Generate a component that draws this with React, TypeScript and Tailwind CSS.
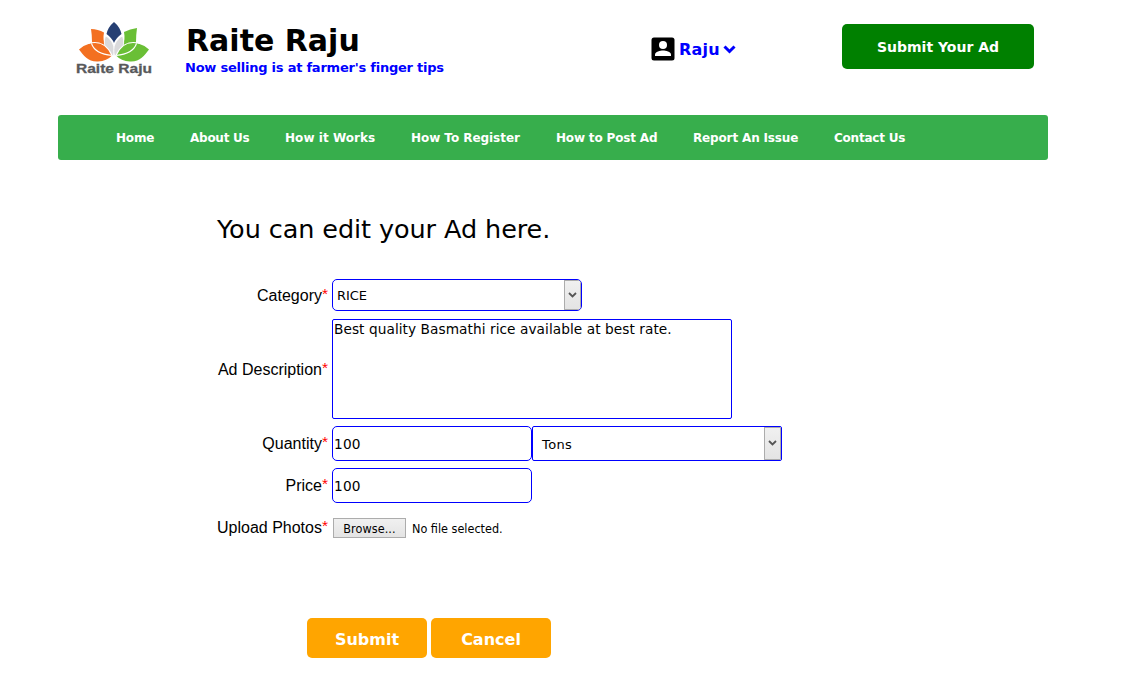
import React from "react";

const nav = [
  { label: "Home", cls: "w-[74px] tracking-[-0.200px]" },
  { label: "About Us", cls: "w-[95px] tracking-[-0.250px]" },
  { label: "How it Works", cls: "w-[126px] tracking-[0.050px]" },
  { label: "How To Register", cls: "w-[145px] tracking-[-0.050px]" },
  { label: "How to Post Ad", cls: "w-[137px] tracking-[-0.170px]" },
  { label: "Report An Issue", cls: "w-[141px] tracking-[-0.150px]" },
  { label: "Contact Us", cls: "w-[90px] tracking-[-0.220px]" },
];

const narrow = "font-['DejaVu_Sans_Condensed','DejaVu_Sans',sans-serif] [font-stretch:condensed]";

function Logo() {
  return (
    <svg className="block h-[56px] w-[78px] shrink-0" viewBox="74 21 78 56">
      <path d="M91 29Q98 29 104 32.500C102 42 106 50 112.500 56C101 55 91 50 92 42Q92 35 91 29z" fill="#f37021" />
      <path d="M137 28Q130 29 124 32C126 42 122 50 115.500 56C127 55 137 50 136 42Q136 35 137 28z" fill="#6abf36" />
      <path d="M105.500 36C102 45 107 54 113.500 56C116 47 112 39 105.500 36z" fill="#d9d9db" stroke="white" strokeWidth="0.8" />
      <path d="M122.500 36C126 45 121 54 114.500 56C112 47 116 39 122.500 36z" fill="#d9d9db" stroke="white" strokeWidth="0.8" />
      <path d="M114 22Q108 27 106.500 34Q112 38 114 43Q116 38 121.500 34Q120 27 114 22z" fill="#263f73" />
      <path d="M79 49.500Q84 45 91 43C100 41 108 46 112 55.500Q107 61 98 61.500C88 62 84 56 79 49.500z" fill="#f37021" />
      <path d="M149 49.500Q144 45 137 43C128 41 120 46 116 55.500Q121 61 130 61.500C140 62 144 56 149 49.500z" fill="#6abf36" />
      <path d="M88 43.500C100 40 108 46 112 55.500M91.500 43.500C94 51 102 54.500 112 55.500M140 43.500C128 40 120 46 116 55.500M136.500 43.500C134 51 126 54.500 116 55.500" fill="none" stroke="white" strokeWidth="1.1" />
      <text x="76" y="73" fontFamily="Liberation Sans" fontWeight="700" fontSize="13" textLength="76" lengthAdjust="spacingAndGlyphs" fill="#58595b" stroke="#58595b" strokeWidth="0.3">Raite Raju</text>
    </svg>
  );
}

function Label({ children }: { children: string }) {
  return (
    <label className="flex w-[328px] shrink-0 justify-end font-['Liberation_Sans',sans-serif] text-[16px] leading-[18px]">
      {children}
      <span className="text-[15.500px] leading-[14px] text-[#ff0000]">*</span>
    </label>
  );
}

function Arrow() {
  return (
    <span className="flex w-[17px] shrink-0 items-center justify-center border border-[#acacac] bg-linear-to-b from-[#f0f0f0] to-[#e4e4e4]">
      <svg className="h-[7px] w-[9px]" viewBox="0 0 9 7">
        <path d="M1 1l3.500 3.500L8 1" fill="none" stroke="#555" strokeWidth="1.800" />
      </svg>
    </span>
  );
}

export default function App() {
  return (
    <div className="h-[683px] w-[1125px] overflow-hidden bg-white font-['DejaVu_Sans',sans-serif] text-black">
      <header className="flex h-[115px] items-start pl-[74px]">
        <div className="pt-[21px]"><Logo /></div>
        <div className="w-[499px] pl-[33px] pt-[23px]">
          <h1 className="pl-px text-[30px] font-bold leading-[36px] whitespace-nowrap">Raite Raju</h1>
          <p className="text-[13px] font-bold leading-[18px] tracking-[-0.230px] whitespace-nowrap text-[#0000ff]">Now selling is at farmer's finger tips</p>
        </div>
        <div className="flex w-[191px] items-start pt-[37px] text-[#0000ff]">
          <svg className="h-[24px] w-[24px]" viewBox="0 0 24 24">
            <rect x="0.5" y="0.5" width="23" height="23" rx="2.5" fill="#000" />
            <circle cx="12" cy="8" r="4" fill="#fff" />
            <path d="M4 19v-1.500c0-2.700 5.300-4 8-4s8 1.300 8 4V19z" fill="#fff" />
          </svg>
          <span className="ml-[4px] pt-px text-[16px] font-bold leading-6 tracking-[0.200px]">Raju</span>
          <svg className="ml-[3px] mt-[8px] h-[9px] w-[13px]" viewBox="0 0 13 9">
            <path d="M1.500 1.500l5 5 5-5" fill="none" stroke="currentColor" strokeWidth="3" />
          </svg>
        </div>
        <button className="mt-[24px] h-[45px] w-[192px] rounded-[5px] bg-[#008000] pt-[2px] text-[14px] font-bold text-white">Submit Your Ad</button>
      </header>
      <nav className="ml-[58px] flex h-[45px] w-[990px] items-center rounded-[3px] bg-[#37ae4c] pl-[58px] pt-px text-[12px] font-bold text-white">
        {nav.map((n) => (
          <a key={n.label} className={`${n.cls} shrink-0 whitespace-nowrap`}>{n.label}</a>
        ))}
      </nav>
      <main>
        <h2 className="ml-[217px] mt-[52px] h-[67px] text-[25.500px] leading-[34px] tracking-[-0.080px]">You can edit your Ad here.</h2>
        <div className="flex h-[32px] items-center">
          <div className="pt-px"><Label>Category</Label></div>
          <div className="ml-[4px] flex h-[32px] w-[250px] overflow-hidden rounded-[5px] border border-[#0000ff]">
            <span className="flex grow items-center pl-[4px] pt-px text-[13px] tracking-[-0.100px]">RICE</span>
            <Arrow />
          </div>
        </div>
        <div className="mt-[8px] flex h-[100px] items-center">
          <div className="pt-px"><Label>Ad Description</Label></div>
          <div className="ml-[4px] h-[100px] w-[400px] rounded-[2px] border border-[#0000ff] pl-px text-[13.700px] leading-[18px] tracking-[0.060px] whitespace-nowrap">Best quality Basmathi rice available at best rate.</div>
        </div>
        <div className="mt-[7px] flex h-[35px] items-center">
          <Label>Quantity</Label>
          <div className="ml-[4px] flex h-[35px] w-[200px] items-center rounded-[5px] border border-[#0000ff] pl-px pt-[2px] text-[13.700px] tracking-[0.200px]">100</div>
          <div className="flex h-[35px] w-[250px] overflow-hidden rounded-[2px] border border-[#0000ff]">
            <span className="flex grow items-center pl-[9px] pt-[2px] text-[13px] tracking-[0.400px]">Tons</span>
            <Arrow />
          </div>
        </div>
        <div className="mt-[7px] flex h-[35px] items-center">
          <Label>Price</Label>
          <div className="ml-[4px] flex h-[35px] w-[200px] items-center rounded-[5px] border border-[#0000ff] pl-px pt-[2px] text-[13.700px] tracking-[0.200px]">100</div>
        </div>
        <div className="mt-[14px] flex h-[22px] items-center">
          <Label>Upload Photos</Label>
          <button className={`${narrow} ml-[5px] h-[20px] w-[73px] border border-[#acacac] bg-linear-to-b from-[#f0f0f0] to-[#e4e4e4] pt-px text-[12.500px] leading-[18px] tracking-[0.080px]`}>Browse...</button>
          <span className={`${narrow} ml-[6px] pt-[2px] text-[12.500px] whitespace-nowrap`}>No file selected.</span>
        </div>
        <div className="ml-[307px] mt-[79px] flex gap-1 text-[16px] font-bold text-white">
          <button className="h-[40px] w-[120px] rounded-[5px] bg-[#ffa500] pt-[3px]">Submit</button>
          <button className="h-[40px] w-[120px] rounded-[5px] bg-[#ffa500] pt-[3px]">Cancel</button>
        </div>
      </main>
    </div>
  );
}
